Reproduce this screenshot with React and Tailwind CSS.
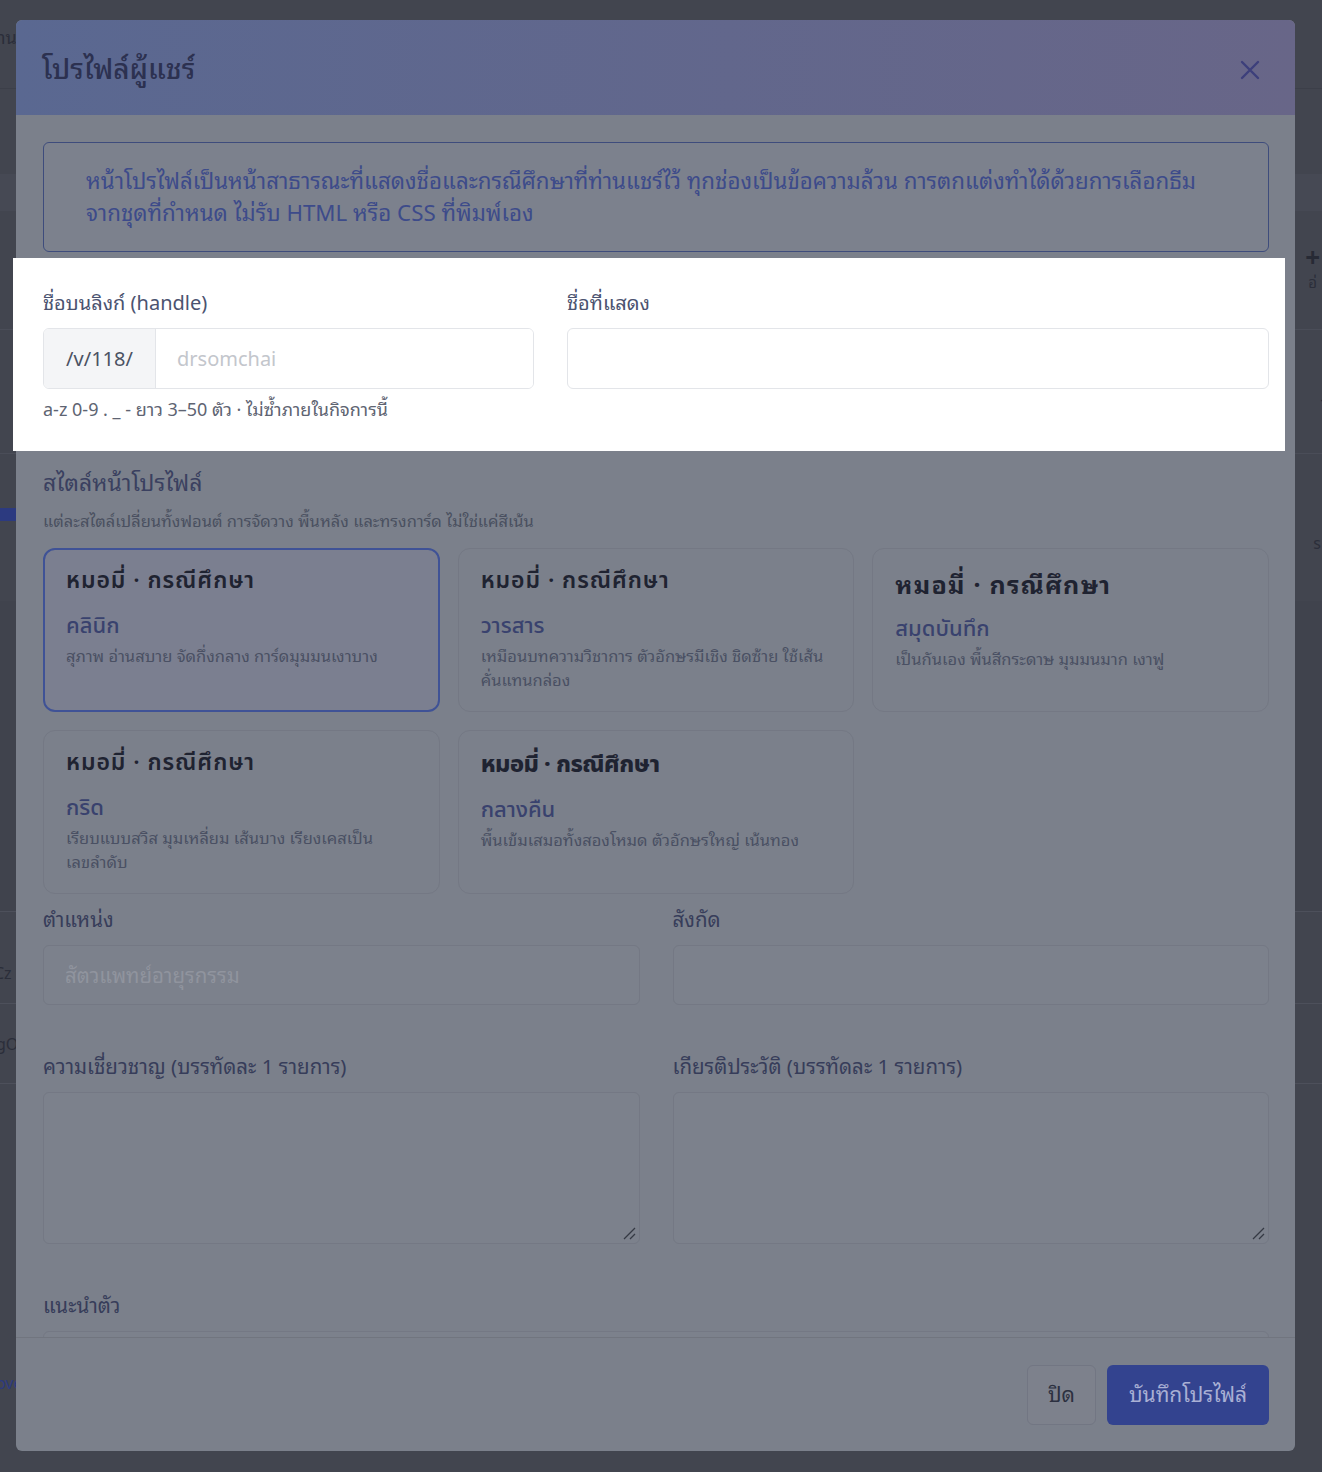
import React from 'react'

const headingFont = "font-['Noto_Sans_Thai','Noto_Sans',sans-serif]"

const styleCards = [
  {
    name: 'คลินิก',
    desc: ['สุภาพ อ่านสบาย จัดกึ่งกลาง การ์ดมุมมนเงาบาง'],
    selected: true,
    titleClass: `${headingFont} text-[23px] font-semibold tracking-[0.04em]`,
  },
  {
    name: 'วารสาร',
    desc: ['เหมือนบทความวิชาการ ตัวอักษรมีเชิง ชิดซ้าย ใช้เส้น', 'คั่นแทนกล่อง'],
    titleClass: `${headingFont} text-[23px] font-semibold tracking-[0.04em]`,
  },
  {
    name: 'สมุดบันทึก',
    desc: ['เป็นกันเอง พื้นสีกระดาษ มุมมนมาก เงาฟู'],
    titleClass: "font-['Noto_Sans','Noto_Sans_Thai_Looped',sans-serif] text-[25px] font-bold tracking-[0.05em] pt-[3px]",
  },
  {
    name: 'กริด',
    desc: ['เรียบแบบสวิส มุมเหลี่ยม เส้นบาง เรียงเคสเป็น', 'เลขลำดับ'],
    titleClass: `${headingFont} text-[23px] font-semibold tracking-[0.04em]`,
  },
  {
    name: 'กลางคืน',
    desc: ['พื้นเข้มเสมอทั้งสองโหมด ตัวอักษรใหญ่ เน้นทอง'],
    titleClass: `${headingFont} text-[23.5px] font-extrabold tracking-[-0.02em] pt-[2px]`,
  },
]

function StyleCard({card}) {
  const border = card.selected
    ? 'border-2 border-[#3f5296] bg-[#7b7f90] px-[21px] pt-[16px]'
    : 'border border-[#747884] bg-[#7b808b] px-[22px] pt-[17px]'
  return (
    <div className={`h-[164px] rounded-[12px] ${border}`}>
      <div className={`leading-[30px] text-[#1f2331] ${card.titleClass}`}>หมอมี่ · กรณีศึกษา</div>
      <div className={`mt-[16px] ${headingFont} text-[22px] font-medium leading-[30px] text-[#39426e]`}>
        {card.name}
      </div>
      <div className="mt-[2px] text-[16.5px] leading-[24px] text-[#4a5063]">
        {card.desc.map((line) => (
          <div key={line}>{line}</div>
        ))}
      </div>
    </div>
  )
}

function DimLabel({children}) {
  return <div className="text-[20.5px] leading-[26px] text-[#373d5a]">{children}</div>
}

function DimTextarea({height}) {
  return (
    <div className="relative mt-[13px]">
      <textarea
        className={`block w-full resize-none rounded-[6px] border border-[#747884] bg-[#7c818c] outline-none ${height}`}
      />
      <svg width="14" height="14" viewBox="0 0 14 14" className="pointer-events-none absolute bottom-[4px] right-[4px]">
        <path d="M13 2 L2 13 M13 8 L8 13" stroke="#353944" strokeWidth="1.3" />
      </svg>
    </div>
  )
}

function Background() {
  return (
    <div className="flex flex-col text-[#2b2e3a]">
      <div className="flex h-[89px] items-start justify-between border-b border-[#3c3f49] pt-[24px]">
        <span className="-ml-[2px] text-[18px]">าน</span>
        <span />
      </div>
      <div className="h-[85px]" />
      <div className="h-[37px] bg-[#464954]" />
      <div className="flex h-[118px] justify-end pr-[2px] pt-[32px]">
        <div className="flex flex-col items-center">
          <span className="text-[26px] font-bold leading-[28px] text-[#272a35]">+</span>
          <span className="text-[15px] leading-[22px]">อ่</span>
        </div>
      </div>
      <div className="flex h-[124px] justify-end border-t border-[#4a4d58] pt-[56px]">
        <span className="-mr-[4px] text-[18px]">-</span>
      </div>
      <div className="flex h-[68px] items-end border-t border-[#4a4d58]">
        <div className="h-[13px] w-[16px] bg-[#2c3a80]" />
      </div>
      <div className="flex h-[80px] justify-end pr-[1px] pt-[10px] text-[16px]">
        <span>s</span>
      </div>
      <div className="h-[310px] bg-[#40434d]" />
      <div className="flex h-[92px] items-end border-t border-[#4d505b] pb-[18px]">
        <span className="-ml-[6px] text-[16px]">Cz</span>
      </div>
      <div className="flex h-[80px] items-center border-t border-[#4d505b]">
        <span className="-ml-[4px] text-[16px]">gO</span>
      </div>
      <div className="flex h-[340px] items-end border-t border-[#4d505b] pb-[28px]">
        <span className="-ml-[4px] text-[16px] text-[#2c3a80]">ove</span>
      </div>
    </div>
  )
}

export default function App() {
  return (
    <div className="relative min-h-[1472px] w-full overflow-hidden bg-[#42454f] font-['Noto_Sans','Noto_Sans_Thai_Looped',sans-serif]">
      <Background />

      <div className="absolute left-[16px] top-[20px] flex h-[1431px] w-[1279px] flex-col rounded-[6px] bg-[#7b808b]">
        <div className="flex h-[95px] shrink-0 items-center justify-between rounded-t-[6px] bg-gradient-to-r from-[#5a6891] to-[#686688] pl-[26px] pr-[35px]">
          <h2 className="text-[28px] font-medium text-[#2c3150]">โปรไฟล์ผู้แชร์</h2>
          <svg width="20" height="20" viewBox="0 0 20 20" className="mt-[4px]">
            <path d="M2 2 L18 18 M18 2 L2 18" stroke="#3d3f7b" strokeWidth="2.4" strokeLinecap="round" />
          </svg>
        </div>

        <div className="min-h-0 flex-1 overflow-y-clip pl-[27px] pr-[26px] pt-[27px]">
          <div className="rounded-[6px] border border-[#3e4c7c] bg-[#7c818d] px-[42px] py-[22px] text-[22.3px] leading-[32px] text-[#3d4b8a]">
            หน้าโปรไฟล์เป็นหน้าสาธารณะที่แสดงชื่อและกรณีศึกษาที่ท่านแชร์ไว้ ทุกช่องเป็นข้อความล้วน การตกแต่งทำได้ด้วยการเลือกธีม
            <br />
            จากชุดที่กำหนด ไม่รับ HTML หรือ CSS ที่พิมพ์เอง
          </div>

          <div className="-ml-[30px] -mr-[16px] mt-[6px] bg-white pb-[30px] pl-[30px] pr-[16px] pt-[32px]">
            <div className="grid grid-cols-[491px_1fr] gap-x-[33px]">
              <div>
                <div className="text-[20px] leading-[26px] text-[#4b5370]">ชื่อบนลิงก์ (handle)</div>
                <div className="mt-[12px] flex h-[61px] overflow-hidden rounded-[6px] border border-[#e3e5e9]">
                  <div className="flex w-[112px] items-center justify-center border-r border-[#e3e5e9] bg-[#f4f5f7] text-[20px] text-[#4b5263]">
                    /v/118/
                  </div>
                  <input
                    className="min-w-0 flex-1 bg-white px-[21px] text-[20px] text-[#1f2937] outline-none placeholder:text-[#c3c6cc]"
                    placeholder="drsomchai"
                  />
                </div>
                <div className="mt-[8px] text-[18px] leading-[24px] text-[#5e6472]">
                  a-z 0-9 . _ - ยาว 3–50 ตัว · ไม่ซ้ำภายในกิจการนี้
                </div>
              </div>
              <div>
                <div className="text-[20px] leading-[26px] text-[#4b5370]">ชื่อที่แสดง</div>
                <input className="mt-[12px] block h-[61px] w-full rounded-[6px] border border-[#e3e5e9] bg-white px-[21px] text-[20px] outline-none" />
              </div>
            </div>
          </div>

          <div className="mt-[16px] text-[23px] leading-[30px] text-[#3a4060]">สไตล์หน้าโปรไฟล์</div>
          <div className="mt-[12px] text-[16.5px] leading-[24px] text-[#4a5060]">
            แต่ละสไตล์เปลี่ยนทั้งฟอนต์ การจัดวาง พื้นหลัง และทรงการ์ด ไม่ใช่แค่สีเน้น
          </div>

          <div className="mt-[15px] grid grid-cols-3 gap-[18px]">
            {styleCards.map((card) => (
              <StyleCard key={card.name} card={card} />
            ))}
          </div>

          <div className="mt-[12px] grid grid-cols-2 gap-x-[33px]">
            <div>
              <DimLabel>ตำแหน่ง</DimLabel>
              <input
                className="mt-[13px] block h-[60px] w-full rounded-[6px] border border-[#747884] bg-[#7c818c] px-[21px] text-[20.5px] outline-none placeholder:text-[#90949e]"
                placeholder="สัตวแพทย์อายุรกรรม"
              />
            </div>
            <div>
              <DimLabel>สังกัด</DimLabel>
              <input className="mt-[13px] block h-[60px] w-full rounded-[6px] border border-[#747884] bg-[#7c818c] px-[21px] text-[20.5px] outline-none" />
            </div>
          </div>

          <div className="mt-[48px] grid grid-cols-2 gap-x-[33px]">
            <div>
              <DimLabel>ความเชี่ยวชาญ (บรรทัดละ 1 รายการ)</DimLabel>
              <DimTextarea height="h-[152px]" />
            </div>
            <div>
              <DimLabel>เกียรติประวัติ (บรรทัดละ 1 รายการ)</DimLabel>
              <DimTextarea height="h-[152px]" />
            </div>
          </div>

          <div className="mt-[48px]">
            <DimLabel>แนะนำตัว</DimLabel>
            <textarea className="mt-[13px] block h-[120px] w-full resize-none rounded-[6px] border border-[#747884] bg-[#7c818c] outline-none" />
          </div>
        </div>

        <div className="flex h-[114px] shrink-0 items-center justify-end gap-[11px] rounded-b-[6px] border-t border-[#71757f] px-[26px]">
          <button className="h-[60px] w-[69px] rounded-[6px] border border-[#727683] bg-[#7d818c] text-[21px] text-[#2c3040]">
            ปิด
          </button>
          <button className="h-[60px] w-[162px] rounded-[6px] bg-[#33438f] text-[21px] text-[#a9b0d4]">
            บันทึกโปรไฟล์
          </button>
        </div>
      </div>
    </div>
  )
}
